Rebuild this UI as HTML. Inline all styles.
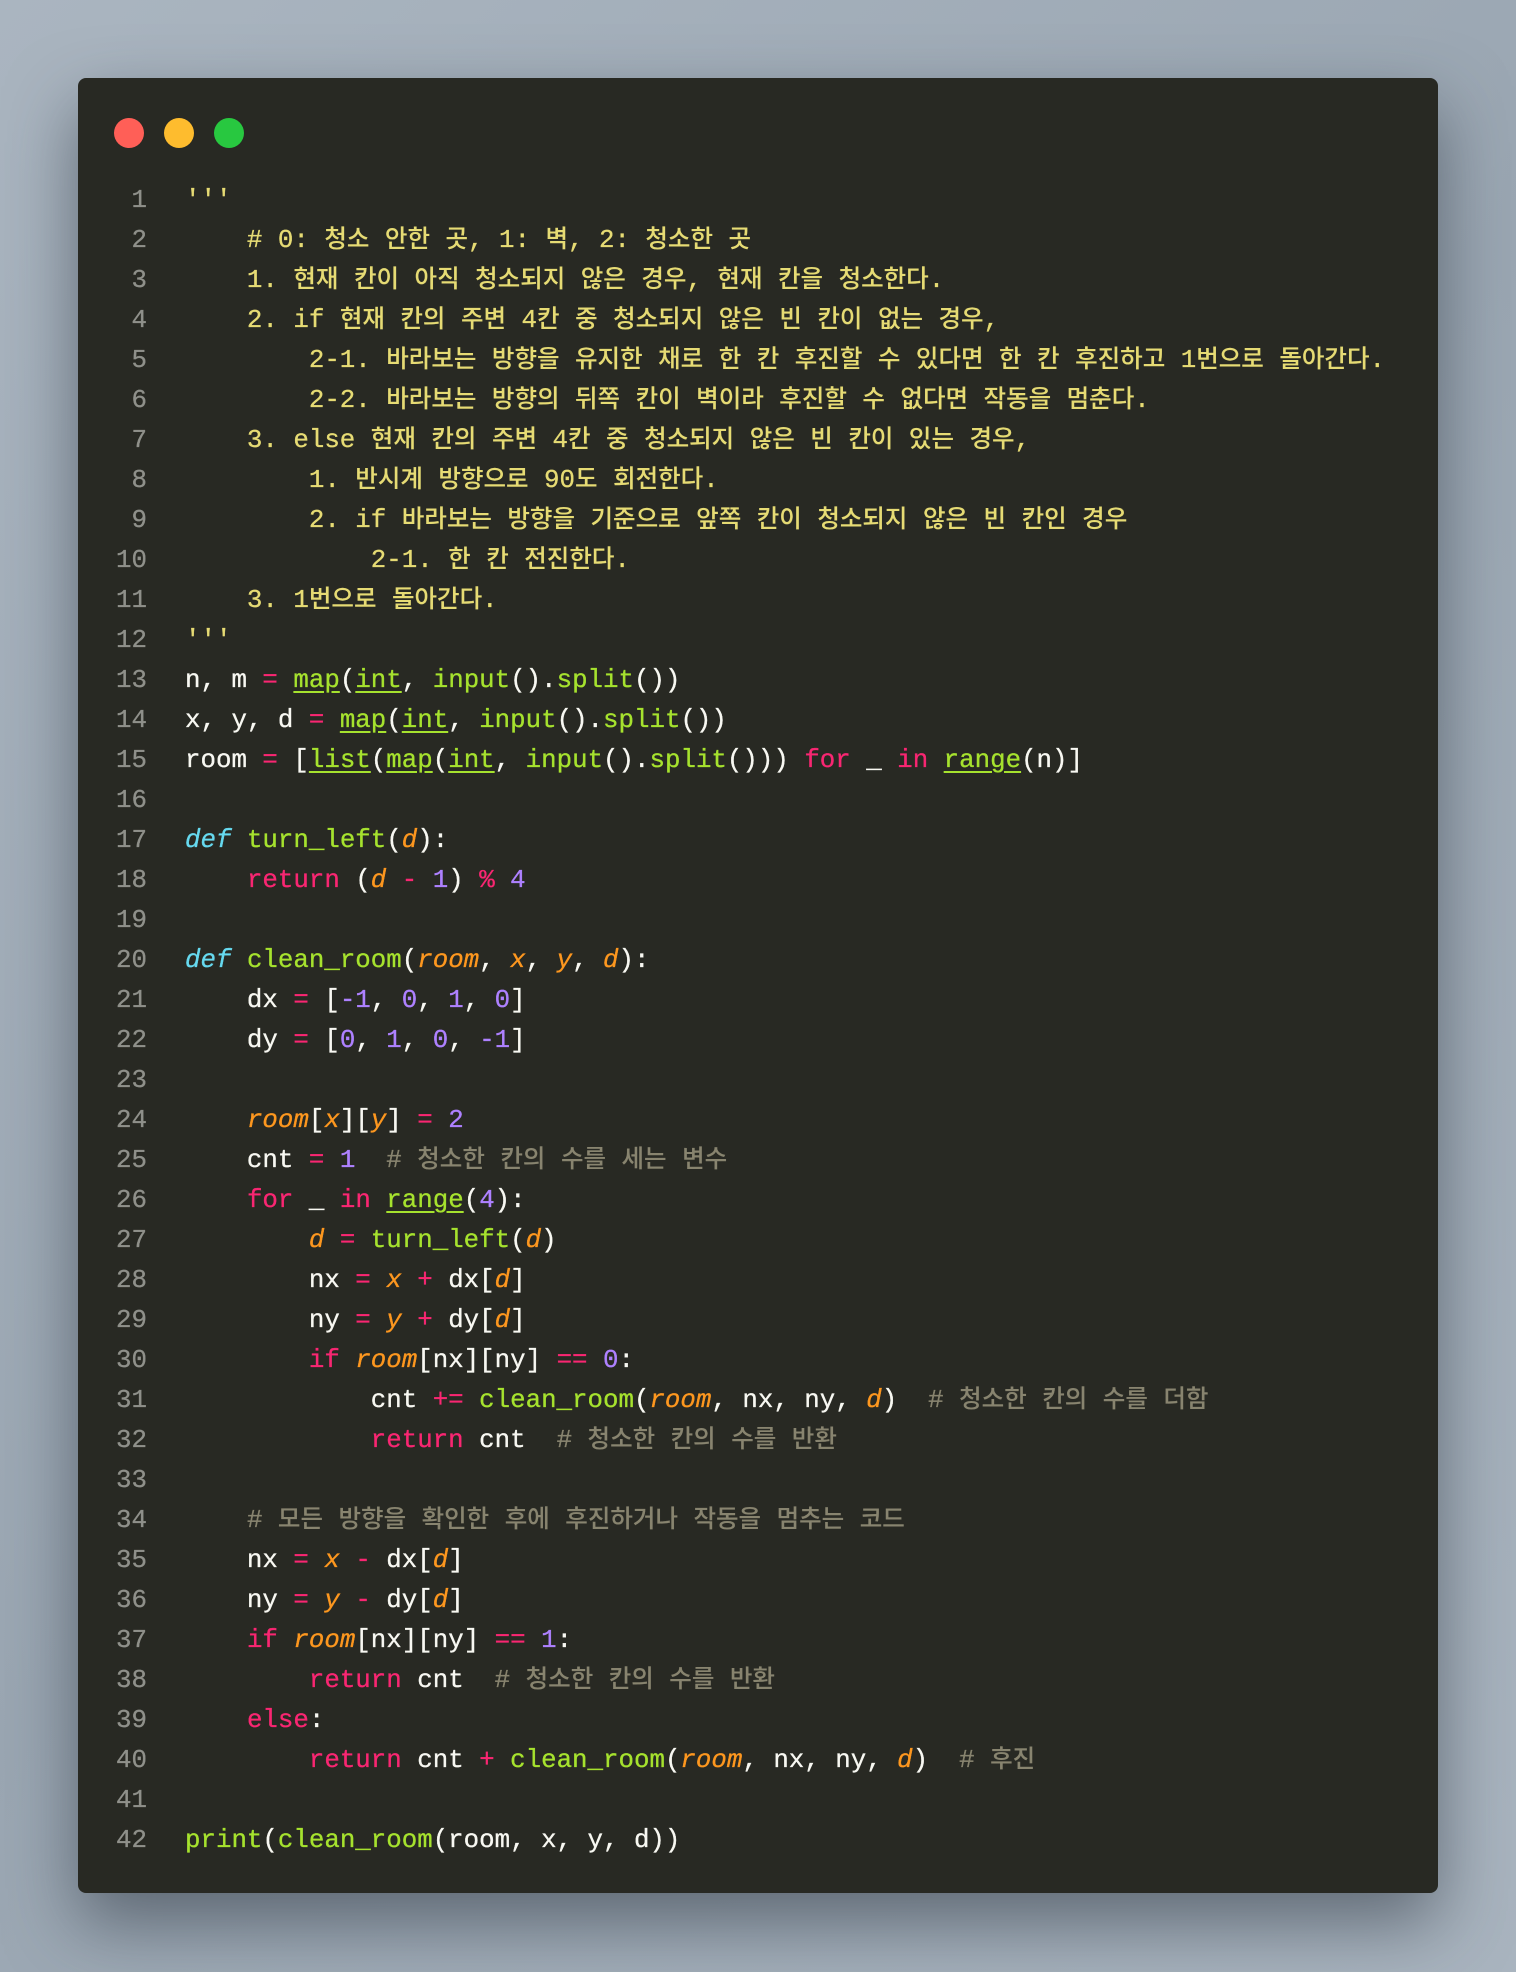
<!DOCTYPE html>
<html><head><meta charset="utf-8"><style>
html,body{margin:0;padding:0}
body{width:1516px;height:1972px;background:linear-gradient(135deg,#aab5c0 0%,#9aa6b2 50%,#a9b4bf 100%);position:relative;overflow:hidden}
.win{position:absolute;left:78px;top:78px;width:1360px;height:1815px;background:#282923;border-radius:8px;box-shadow:0 30px 70px rgba(40,50,60,.55)}
.dot{position:absolute;top:40px;width:30px;height:30px;border-radius:50%}
.code{position:absolute;left:0;top:103px;font-family:"Liberation Mono","NanumGothic",monospace;font-size:25.8px;line-height:40px;color:#f8f8f2;white-space:pre;-webkit-text-stroke:0.3px currentColor}
.code>div{height:40px;overflow:visible}
.ln{display:inline-block;width:69px;text-align:right;color:#8f908a;margin-right:38px}
b{font-weight:500;font-family:"Noto Sans CJK KR","NanumGothic",sans-serif;font-size:24.5px;line-height:1;-webkit-text-stroke:0.1px currentColor}
.s{color:#e6db74}.k{color:#f92672}.f{color:#a6e22e}.u{color:#a6e22e;text-decoration:underline;text-underline-offset:4px}
.p{color:#fd971f;font-style:italic}.n{color:#ae81ff}.d{color:#66d9ef;font-style:italic}.c{color:#88846f}
</style></head><body>
<div class="win">
<div class="dot" style="left:36px;background:#ff5f57"></div>
<div class="dot" style="left:86px;background:#febc2e"></div>
<div class="dot" style="left:136px;background:#28c840"></div>
<div class="code"><div><span class="ln">1</span><span class="s">'''</span></div><div><span class="ln">2</span><span class="s">    # 0: <b>청소</b> <b>안한</b> <b>곳</b>, 1: <b>벽</b>, 2: <b>청소한</b> <b>곳</b></span></div><div><span class="ln">3</span><span class="s">    1. <b>현재</b> <b>칸이</b> <b>아직</b> <b>청소되지</b> <b>않은</b> <b>경우</b>, <b>현재</b> <b>칸을</b> <b>청소한다</b>.</span></div><div><span class="ln">4</span><span class="s">    2. if <b>현재</b> <b>칸의</b> <b>주변</b> 4<b>칸</b> <b>중</b> <b>청소되지</b> <b>않은</b> <b>빈</b> <b>칸이</b> <b>없는</b> <b>경우</b>,</span></div><div><span class="ln">5</span><span class="s">        2-1. <b>바라보는</b> <b>방향을</b> <b>유지한</b> <b>채로</b> <b>한</b> <b>칸</b> <b>후진할</b> <b>수</b> <b>있다면</b> <b>한</b> <b>칸</b> <b>후진하고</b> 1<b>번으로</b> <b>돌아간다</b>.</span></div><div><span class="ln">6</span><span class="s">        2-2. <b>바라보는</b> <b>방향의</b> <b>뒤쪽</b> <b>칸이</b> <b>벽이라</b> <b>후진할</b> <b>수</b> <b>없다면</b> <b>작동을</b> <b>멈춘다</b>.</span></div><div><span class="ln">7</span><span class="s">    3. else <b>현재</b> <b>칸의</b> <b>주변</b> 4<b>칸</b> <b>중</b> <b>청소되지</b> <b>않은</b> <b>빈</b> <b>칸이</b> <b>있는</b> <b>경우</b>,</span></div><div><span class="ln">8</span><span class="s">        1. <b>반시계</b> <b>방향으로</b> 90<b>도</b> <b>회전한다</b>.</span></div><div><span class="ln">9</span><span class="s">        2. if <b>바라보는</b> <b>방향을</b> <b>기준으로</b> <b>앞쪽</b> <b>칸이</b> <b>청소되지</b> <b>않은</b> <b>빈</b> <b>칸인</b> <b>경우</b></span></div><div><span class="ln">10</span><span class="s">            2-1. <b>한</b> <b>칸</b> <b>전진한다</b>.</span></div><div><span class="ln">11</span><span class="s">    3. 1<b>번으로</b> <b>돌아간다</b>.</span></div><div><span class="ln">12</span><span class="s">'''</span></div><div><span class="ln">13</span>n, m <span class="k">=</span> <span class="u">map</span>(<span class="u">int</span>, <span class="f">input</span>().<span class="f">split</span>())</div><div><span class="ln">14</span>x, y, d <span class="k">=</span> <span class="u">map</span>(<span class="u">int</span>, <span class="f">input</span>().<span class="f">split</span>())</div><div><span class="ln">15</span>room <span class="k">=</span> [<span class="u">list</span>(<span class="u">map</span>(<span class="u">int</span>, <span class="f">input</span>().<span class="f">split</span>())) <span class="k">for</span> _ <span class="k">in</span> <span class="u">range</span>(n)]</div><div><span class="ln">16</span></div><div><span class="ln">17</span><span class="d">def</span> <span class="f">turn_left</span>(<span class="p">d</span>):</div><div><span class="ln">18</span>    <span class="k">return</span> (<span class="p">d</span> <span class="k">-</span> <span class="n">1</span>) <span class="k">%</span> <span class="n">4</span></div><div><span class="ln">19</span></div><div><span class="ln">20</span><span class="d">def</span> <span class="f">clean_room</span>(<span class="p">room</span>, <span class="p">x</span>, <span class="p">y</span>, <span class="p">d</span>):</div><div><span class="ln">21</span>    dx <span class="k">=</span> [<span class="n">-1</span>, <span class="n">0</span>, <span class="n">1</span>, <span class="n">0</span>]</div><div><span class="ln">22</span>    dy <span class="k">=</span> [<span class="n">0</span>, <span class="n">1</span>, <span class="n">0</span>, <span class="n">-1</span>]</div><div><span class="ln">23</span></div><div><span class="ln">24</span>    <span class="p">room</span>[<span class="p">x</span>][<span class="p">y</span>] <span class="k">=</span> <span class="n">2</span></div><div><span class="ln">25</span>    cnt <span class="k">=</span> <span class="n">1</span>  <span class="c"># <b>청소한</b> <b>칸의</b> <b>수를</b> <b>세는</b> <b>변수</b></span></div><div><span class="ln">26</span>    <span class="k">for</span> _ <span class="k">in</span> <span class="u">range</span>(<span class="n">4</span>):</div><div><span class="ln">27</span>        <span class="p">d</span> <span class="k">=</span> <span class="f">turn_left</span>(<span class="p">d</span>)</div><div><span class="ln">28</span>        nx <span class="k">=</span> <span class="p">x</span> <span class="k">+</span> dx[<span class="p">d</span>]</div><div><span class="ln">29</span>        ny <span class="k">=</span> <span class="p">y</span> <span class="k">+</span> dy[<span class="p">d</span>]</div><div><span class="ln">30</span>        <span class="k">if</span> <span class="p">room</span>[nx][ny] <span class="k">==</span> <span class="n">0</span>:</div><div><span class="ln">31</span>            cnt <span class="k">+=</span> <span class="f">clean_room</span>(<span class="p">room</span>, nx, ny, <span class="p">d</span>)  <span class="c"># <b>청소한</b> <b>칸의</b> <b>수를</b> <b>더함</b></span></div><div><span class="ln">32</span>            <span class="k">return</span> cnt  <span class="c"># <b>청소한</b> <b>칸의</b> <b>수를</b> <b>반환</b></span></div><div><span class="ln">33</span></div><div><span class="ln">34</span>    <span class="c"># <b>모든</b> <b>방향을</b> <b>확인한</b> <b>후에</b> <b>후진하거나</b> <b>작동을</b> <b>멈추는</b> <b>코드</b></span></div><div><span class="ln">35</span>    nx <span class="k">=</span> <span class="p">x</span> <span class="k">-</span> dx[<span class="p">d</span>]</div><div><span class="ln">36</span>    ny <span class="k">=</span> <span class="p">y</span> <span class="k">-</span> dy[<span class="p">d</span>]</div><div><span class="ln">37</span>    <span class="k">if</span> <span class="p">room</span>[nx][ny] <span class="k">==</span> <span class="n">1</span>:</div><div><span class="ln">38</span>        <span class="k">return</span> cnt  <span class="c"># <b>청소한</b> <b>칸의</b> <b>수를</b> <b>반환</b></span></div><div><span class="ln">39</span>    <span class="k">else</span>:</div><div><span class="ln">40</span>        <span class="k">return</span> cnt <span class="k">+</span> <span class="f">clean_room</span>(<span class="p">room</span>, nx, ny, <span class="p">d</span>)  <span class="c"># <b>후진</b></span></div><div><span class="ln">41</span></div><div><span class="ln">42</span><span class="f">print</span>(<span class="f">clean_room</span>(room, x, y, d))</div></div>
</div>
</body></html>
